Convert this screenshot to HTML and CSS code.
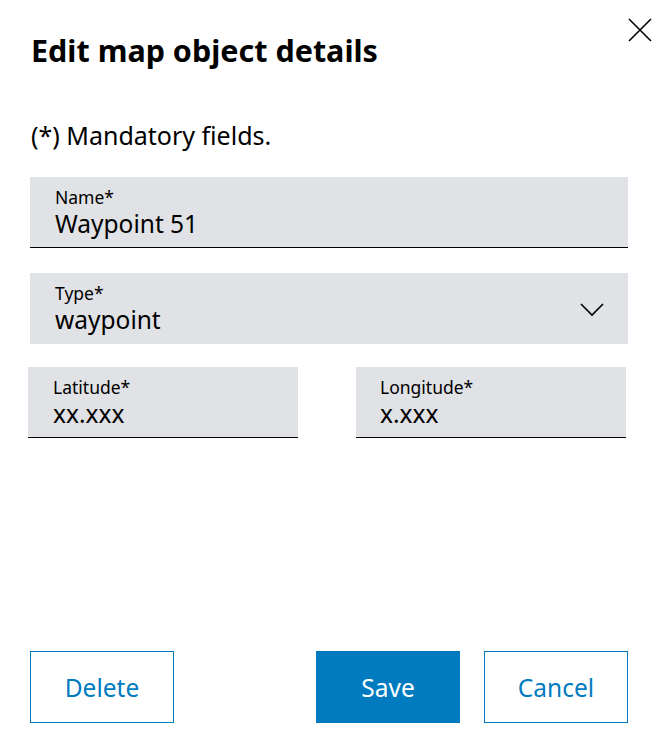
FILE: index.html
```html
<!DOCTYPE html>
<html lang="en">
<head>
<meta charset="utf-8">
<title>Edit map object details</title>
<link rel="stylesheet" href="styles.css">
</head>
<body>
<div class="dialog">
  <div class="header">
    <h1 class="title">Edit map object details</h1>
    <button class="close" aria-label="Close">
      <svg width="24" height="24" viewBox="0 0 24 24"><path d="M1 1 L23 23 M23 1 L1 23" stroke="#000" stroke-width="1.6" fill="none"/></svg>
    </button>
  </div>
  <div class="form">
    <p class="note">(*) Mandatory fields.</p>
    <div class="field underlined">
      <div class="label">Name*</div>
      <div class="value">Waypoint 51</div>
    </div>
    <div class="field select">
      <div class="texts">
        <div class="label">Type*</div>
        <div class="value">waypoint</div>
      </div>
      <svg class="chevron" width="24" height="14" viewBox="0 0 24 14"><path d="M1 1 L12 12 L23 1" stroke="#000" stroke-width="1.6" fill="none"/></svg>
    </div>
    <div class="row">
      <div class="field underlined half">
        <div class="label">Latitude*</div>
        <div class="value">xx.xxx</div>
      </div>
      <div class="field underlined half">
        <div class="label">Longitude*</div>
        <div class="value">x.xxx</div>
      </div>
    </div>
  </div>
  <div class="footer">
    <button class="btn secondary">Delete</button>
    <div class="spacer"></div>
    <button class="btn primary">Save</button>
    <button class="btn secondary">Cancel</button>
  </div>
</div>
</body>
</html>
```

FILE: styles.css
```css
* { box-sizing: border-box; }
html, body { margin: 0; padding: 0; background: #fff; }
body {
  font-family: "Noto Sans", Roboto, "Liberation Sans", sans-serif;
  color: #000;
  width: 669px;
  height: 755px;
  overflow: hidden;
}
.dialog {
  height: 755px;
  padding: 18px 17px 32px 30px;
  display: flex;
  flex-direction: column;
}
.header {
  display: flex;
  justify-content: space-between;
  align-items: flex-start;
}
.title {
  margin: 16px 0 0 1px;
  font-size: 30.5px;
  line-height: 32px;
  font-weight: 700;
}
.close {
  border: 0;
  background: none;
  padding: 0;
  width: 24px;
  height: 24px;
  display: block;
  cursor: pointer;
}
.close svg { display: block; }
.form {
  margin-right: 24px;
}
.note {
  margin: 54px 0 0 1px;
  font-size: 25px;
  line-height: 30px;
}
.field {
  background: #e0e2e5;
  height: 71px;
  padding: 9px 25px 0 25px;
}
.field.underlined {
  border-bottom: 1px solid #000;
}
.note + .field { margin-top: 27px; }
.label {
  font-size: 17.5px;
  line-height: 22px;
}
.value {
  font-size: 24.5px;
  line-height: 32px;
}
.select {
  margin-top: 25px;
  display: flex;
  justify-content: space-between;
  align-items: flex-start;
  padding-right: 24px;
}
.chevron {
  display: block;
  margin-top: 21px;
}
.row {
  margin: 23px 2px 0 -2px;
  display: flex;
  justify-content: space-between;
}
.half {
  width: 270px;
}
.half + .half { padding-left: 24px; }
.footer {
  margin-top: auto;
  margin-right: 24px;
  display: flex;
  gap: 24px;
}
.spacer { flex: 1; }
.btn {
  width: 144px;
  height: 72px;
  font-family: inherit;
  font-size: 24.5px;
  border: 1px solid #007bc0;
  cursor: pointer;
}
.btn.secondary {
  background: #fff;
  color: #007bc0;
}
.btn.primary {
  background: #007bc0;
  color: #fff;
}
```
